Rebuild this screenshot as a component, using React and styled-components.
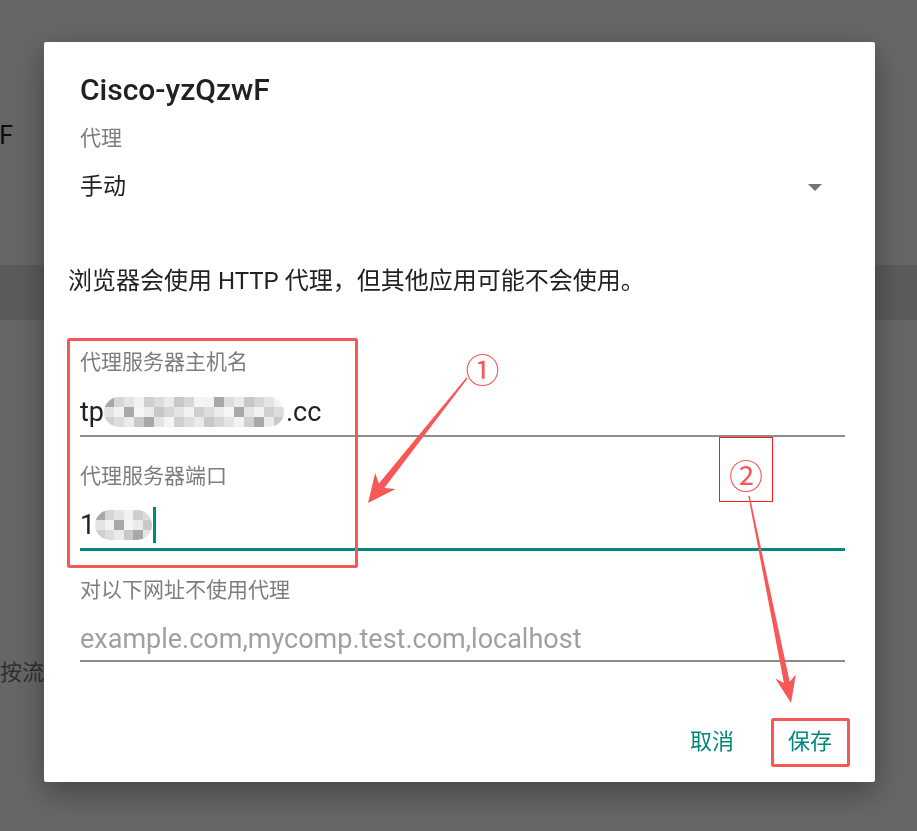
import styled, { createGlobalStyle } from "styled-components";

const GlobalStyle = createGlobalStyle`
  html, body {
    margin: 0;
    padding: 0;
    overflow: hidden;
  }
  body {
    font-family: Roboto, "Noto Sans CJK SC", sans-serif;
  }
`;

const BackPage = styled.div`
  width: 917px;
  height: 831px;
  background: #ffffff;
  padding-top: 116px;
  box-sizing: border-box;
  display: flex;
  flex-direction: column;
`;

const BackTitle = styled.div`
  width: 13px;
  display: flex;
  justify-content: flex-end;
  white-space: nowrap;
  font-size: 25px;
  line-height: 40px;
  color: #212121;
`;

const BackBand = styled.div`
  margin-top: 109px;
  height: 55px;
  background: #e2e2e2;
`;

const BackText = styled.div`
  margin-top: 338px;
  font-size: 22px;
  line-height: 30px;
  color: #757575;
  white-space: nowrap;
`;

const Scrim = styled.div`
  position: fixed;
  inset: 0;
  background: rgba(0, 0, 0, 0.6);
`;

const Dialog = styled.div`
  position: fixed;
  top: 42px;
  left: 44px;
  width: 831px;
  height: 740px;
  box-sizing: border-box;
  padding: 30px 30px 25px 36px;
  background: #ffffff;
  border-radius: 2px;
  box-shadow: 0 10px 32px rgba(0, 0, 0, 0.35);
  display: flex;
  flex-direction: column;
`;

const Title = styled.h2`
  margin: 0;
  font-size: 30px;
  line-height: 36px;
  font-weight: 500;
  color: #212121;
`;

const FieldLabel = styled.div`
  margin-top: ${(p) => p.$top}px;
  font-size: 21px;
  line-height: 28px;
  color: #7d7d7d;
`;

const SelectRow = styled.div`
  margin-top: 19px;
  display: flex;
  align-items: center;
  justify-content: space-between;
  font-size: 23px;
  line-height: 32px;
  color: #212121;
`;

const Caret = styled.span`
  width: 0;
  height: 0;
  margin-right: 23px;
  border-left: 7px solid transparent;
  border-right: 7px solid transparent;
  border-top: 7px solid #757575;
`;

const Info = styled.p`
  margin: 62px 0 0 -12px;
  font-size: 24px;
  line-height: 32px;
  color: #212121;
`;

const InputLine = styled.div`
  margin-top: ${(p) => p.$top}px;
  display: flex;
  align-items: center;
  height: 36px;
  padding-bottom: ${(p) => p.$pad}px;
  font-size: 27px;
  line-height: 36px;
  white-space: nowrap;
  color: ${(p) => (p.$placeholder ? "#a0a0a0" : "#212121")};
  border-bottom: ${(p) => (p.$focused ? "3px solid #00897b" : "2px solid #8c8c8c")};
`;

const Mosaic = styled.span`
  display: inline-grid;
  grid-template-columns: repeat(${(p) => p.$cols}, ${(p) => p.$size}px);
  grid-auto-rows: 10px;
  margin: 0 ${(p) => p.$gap}px 0 0;
  border-radius: 15px;
  overflow: hidden;
  filter: blur(0.6px);
`;

const Cell = styled.span`
  background: rgb(${(p) => p.$g}, ${(p) => p.$g}, ${(p) => p.$g});
`;

const Cursor = styled.span`
  display: inline-block;
  width: 3px;
  height: 36px;
  margin-left: 1px;
  background: #00897b;
`;

const Actions = styled.div`
  margin-top: auto;
  margin-right: 13px;
  display: flex;
  justify-content: flex-end;
  gap: 54px;
`;

const TextButton = styled.button`
  border: none;
  background: none;
  padding: 0;
  font-family: inherit;
  font-size: 22px;
  line-height: 30px;
  color: #00897b;
  cursor: pointer;
`;

const Annotations = styled.svg`
  position: fixed;
  left: 0;
  top: 0;
  pointer-events: none;
`;

const Mark = styled.text`
  font-family: "Noto Sans CJK SC", sans-serif;
  font-size: 34px;
  fill: #f75757;
`;

function shade(i, j) {
  if ((i * 13 + j * 7) % 11 === 0) return 168;
  if ((i * 5 + j * 3) % 9 === 0) return 245;
  return 200 + ((i * 37 + j * 53) % 7) * 7;
}

function Blur({ cols, size = 10, gap = 0 }) {
  const cells = [];
  for (let j = 0; j < 3; j++) {
    for (let i = 0; i < cols; i++) {
      cells.push(<Cell key={`${i}-${j}`} $g={shade(i, j)} />);
    }
  }
  return (
    <Mosaic $cols={cols} $size={size} $gap={gap}>
      {cells}
    </Mosaic>
  );
}

export default function App() {
  return (
    <>
      <GlobalStyle />
      <BackPage>
        <BackTitle>Cisco-yzQzwF</BackTitle>
        <BackBand />
        <BackText>按流量计费</BackText>
      </BackPage>
      <Scrim />
      <Dialog>
        <Title>Cisco-yzQzwF</Title>
        <FieldLabel $top={16}>代理</FieldLabel>
        <SelectRow>
          <span>手动</span>
          <Caret />
        </SelectRow>
        <Info>浏览器会使用 HTTP 代理，但其他应用可能不会使用。</Info>

        <FieldLabel $top={51}>代理服务器主机名</FieldLabel>
        <InputLine $top={18} $pad={5}>
          tp
          <Blur cols={18} gap={2} />
          .cc
        </InputLine>

        <FieldLabel $top={25}>代理服务器端口</FieldLabel>
        <InputLine $top={17} $pad={5} $focused>
          1
          <Blur cols={6} size={9.5} />
          <Cursor />
        </InputLine>

        <FieldLabel $top={25}>对以下网址不使用代理</FieldLabel>
        <InputLine $top={17} $pad={3} $placeholder>
          example.com,mycomp.test.com,localhost
        </InputLine>

        <Actions>
          <TextButton>取消</TextButton>
          <TextButton>保存</TextButton>
        </Actions>
      </Dialog>

      <Annotations width="917" height="831" viewBox="0 0 917 831">
        <rect x="68.5" y="339.5" width="288" height="227" fill="none" stroke="#f75757" strokeWidth="3" rx="1" />
        <rect x="772.5" y="719.5" width="76" height="46" fill="none" stroke="#f75757" strokeWidth="3" rx="1" />
        <rect x="719.5" y="437.5" width="53" height="64" fill="none" stroke="#ff1a1a" strokeWidth="1" />
        <polygon
          fill="#f75757"
          points="467.6,378.5 384.3,488 395.6,489.1 368,503 375.2,472.9 378.9,483.6 466.4,377.5"
        />
        <polygon
          fill="#f75757"
          points="749.7,495.9 789.7,681.8 795.9,674.4 791,703 775.3,678.6 783.9,683 748.3,496.1"
        />
        <Mark x="482.5" y="368" textAnchor="middle" dominantBaseline="central">①</Mark>
        <Mark x="746" y="474" textAnchor="middle" dominantBaseline="central">②</Mark>
      </Annotations>
    </>
  );
}
